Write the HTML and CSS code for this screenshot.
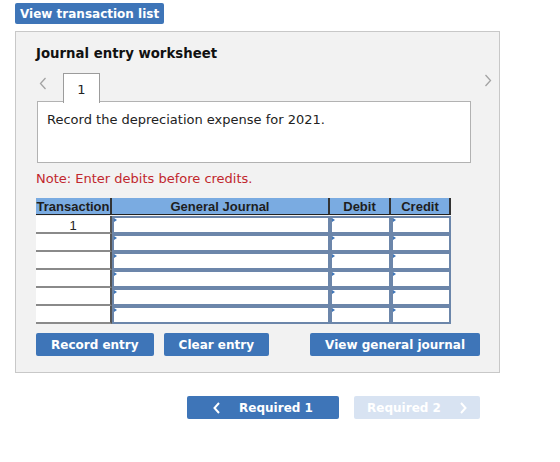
FILE: index.html
```html
<!DOCTYPE html>
<html lang="en">
<head>
    <meta charset="UTF-8">
    <title>Journal entry worksheet</title>
    <link rel="stylesheet" href="styles.css">
</head>
<body>
    <button class="btn btn-list">View transaction list</button>

    <div class="panel">
        <h3 class="panel-title">Journal entry worksheet</h3>

        <div class="tabs">
            <span class="arrow">
                <svg width="8" height="13" viewBox="0 0 8 13"><path d="M6.5 1 L1.5 6.5 L6.5 12" fill="none" stroke="#a3a3a3" stroke-width="1.3"/></svg>
            </span>
            <span class="tab">1</span>
            <span class="arrow arrow-next">
                <svg width="8" height="13" viewBox="0 0 8 13"><path d="M1.5 1 L6.5 6.5 L1.5 12" fill="none" stroke="#a3a3a3" stroke-width="1.3"/></svg>
            </span>
        </div>

        <div class="task">Record the depreciation expense for 2021.</div>

        <p class="note">Note: Enter debits before credits.</p>

        <div class="journal">
            <div class="jh">Transaction</div>
            <div class="jh">General Journal</div>
            <div class="jh">Debit</div>
            <div class="jh">Credit</div>

            <div class="jt">1</div><div class="jf"></div><div class="jf"></div><div class="jf"></div>
            <div class="jt"></div><div class="jf"></div><div class="jf"></div><div class="jf"></div>
            <div class="jt"></div><div class="jf"></div><div class="jf"></div><div class="jf"></div>
            <div class="jt"></div><div class="jf"></div><div class="jf"></div><div class="jf"></div>
            <div class="jt"></div><div class="jf"></div><div class="jf"></div><div class="jf"></div>
            <div class="jt"></div><div class="jf"></div><div class="jf"></div><div class="jf"></div>
        </div>

        <div class="actions">
            <button class="btn">Record entry</button>
            <button class="btn">Clear entry</button>
            <button class="btn btn-right">View general journal</button>
        </div>
    </div>

    <div class="pager">
        <button class="btn btn-req">
            <svg width="8" height="12" viewBox="0 0 8 12"><path d="M6 1 L1.5 6 L6 11" fill="none" stroke="#fff" stroke-width="2"/></svg>
            Required 1
        </button>
        <button class="btn btn-req btn-off">
            Required 2
            <svg width="8" height="12" viewBox="0 0 8 12"><path d="M2 1 L6.5 6 L2 11" fill="none" stroke="#fff" stroke-width="2"/></svg>
        </button>
    </div>
</body>
</html>
```

FILE: styles.css
```css
body { margin: 0; padding: 3px 0 0 15px; font-family: "DejaVu Sans", Verdana, sans-serif; font-size: 13px; color: #222; background: #fff; }

.btn { display: inline-flex; align-items: center; justify-content: center; height: 23px; padding: 0 15px; border: none; border-radius: 2px; background: #3e75b8; color: #fff; font-family: "DejaVu Sans", Verdana, sans-serif; font-weight: bold; font-size: 12px; white-space: nowrap; cursor: pointer; }
.btn-list { height: 21px; padding: 0 5px; }

.panel { box-sizing: border-box; width: 485px; margin-top: 7px; padding: 14px 20px 16px 20px; background: #f2f2f2; border: 1px solid #c8c8c8; }
.panel-title { margin: 0; font-size: 13.3px; line-height: 16px; font-weight: bold; color: #111; }

.tabs { display: flex; align-items: flex-start; margin-top: 11px; height: 29px; position: relative; z-index: 1; margin-bottom: -1px; }
.arrow { display: flex; width: 8px; margin: 4px 0 0 3px; }
.arrow-next { margin: 1px -13px 0 auto; }
.tab { box-sizing: border-box; width: 37px; height: 30px; margin-left: 16px; border: 1px solid #9c9c9c; border-bottom: none; background: #fff; text-align: center; line-height: 31px; }

.task { box-sizing: border-box; width: 434px; height: 62px; margin-left: 1px; padding: 9px 9px; border: 1px solid #b2b2b2; background: #fff; line-height: 18px; }

.note { margin: 8px 0 0; line-height: 16px; color: #c1272d; }

.journal { display: grid; grid-template-columns: 76px 218px 61px 60px; grid-auto-rows: 18px; width: 415px; margin-top: 11px; font-family: "Liberation Sans", Arial, sans-serif; }
.jh { height: 16px; line-height: 17px; background: #7aabe1; border-bottom: 1px solid #222; border-right: 2px solid #333; text-align: center; font-weight: bold; font-size: 13px; color: #1e1e1e; }
.jt { box-sizing: border-box; padding-top: 2px; background: #fff; border-bottom: 2px solid #8a8a8a; border-right: 2px solid #555; text-align: center; line-height: 16px; font-size: 13px; }
.jf { box-sizing: border-box; position: relative; background: #fff; border: 2px solid #6c86aa; }
.jf::before { content: ""; position: absolute; left: 0; top: 0; border-top: 2px solid transparent; border-bottom: 2px solid transparent; border-left: 3px solid #3e75b8; }

.actions { display: flex; gap: 10px; margin-top: 9px; }
.btn-right { margin-left: auto; margin-right: -1px; }

.pager { box-sizing: border-box; width: 485px; display: flex; justify-content: flex-end; gap: 15px; margin-top: 23px; padding-right: 20px; }
.btn-req { gap: 18px; width: 152px; padding: 0; font-size: 12px; }
.btn-off { width: 126px; background: #d8e3f2; }
```
